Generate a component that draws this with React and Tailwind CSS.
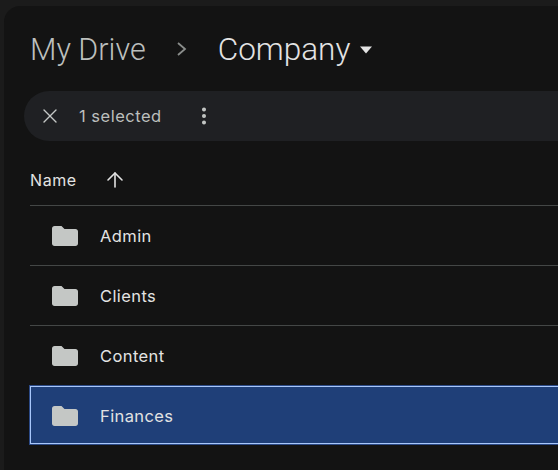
import React from "react";
import { X, ArrowUp, EllipsisVertical } from "lucide-react";

function FolderIcon() {
  return (
    <svg width="26" height="20" viewBox="0 0 26 20" className="text-[#c4c7c5]">
      <path
        fill="currentColor"
        d="M2.5 0H9.5L12.5 3H23.5C24.9 3 26 4.1 26 5.5V17.5C26 18.9 24.9 20 23.5 20H2.5C1.1 20 0 18.9 0 17.5V2.5C0 1.1 1.1 0 2.5 0Z"
      />
    </svg>
  );
}

function Row({ name }) {
  return (
    <div className="h-[60px] flex items-center border-b border-[#444746] pl-[22px] box-border">
      <FolderIcon />
      <span className="ml-[22px] text-[16.5px] tracking-[0.4px] text-[#e3e3e3] mt-[1px]">{name}</span>
    </div>
  );
}

export default function App() {
  return (
    <div className="w-[558px] h-[470px] overflow-hidden bg-[#1b1b1b] pl-[4px] pt-[6px] font-['Inter',sans-serif]">
      <div className="h-full bg-[#131313] rounded-tl-[16px]">
        <div className="flex items-center h-[85px] pl-[26px] font-['Roboto',sans-serif]">
          <span className="text-[30.5px] font-light text-[#bcbfbd] mt-[2px]">My Drive</span>
          <svg width="12" height="16" viewBox="0 0 12 16" className="ml-[30px] mt-[1px] text-[#8a8d8b]">
            <path d="M2 2L9 8L2 14" fill="none" stroke="currentColor" strokeWidth="1.8" />
          </svg>
          <span className="ml-[30px] text-[31.5px] font-light text-[#e3e3e3] mt-[2px]">Company</span>
          <svg width="14" height="8" viewBox="0 0 14 8" className="ml-[9px] mt-[2px] text-[#e3e3e3]">
            <path d="M1 0.5H13L7 7.5Z" fill="currentColor" />
          </svg>
        </div>
        <div className="flex items-center h-[50px] ml-[20px] bg-[#1f2023] rounded-l-[25px] pl-[14px]">
          <X size={24} strokeWidth={1.4} className="text-[#c4c7c5]" />
          <span className="ml-[17px] text-[16.5px] tracking-[0.5px] text-[#bcbfbd]">1 selected</span>
          <EllipsisVertical size={22} strokeWidth={2.4} className="ml-[31px] text-[#c4c7c5]" />
        </div>
        <div className="ml-[26px] mt-[15px]">
          <div className="h-[50px] flex items-center border-b border-[#444746]">
            <span className="text-[16px] tracking-[0.6px] text-[#e3e3e3] mb-[2px]">Name</span>
            <ArrowUp size={24} strokeWidth={1.6} className="ml-[26px] text-[#e3e3e3] mb-[2px]" />
          </div>
          <Row name="Admin" />
          <Row name="Clients" />
          <Row name="Content" />
          <div className="h-[58px] mr-[-10px] flex items-center border border-[#a8c7fa] outline outline-[#2c4a86] bg-[#1f3f78] pl-[21px] pt-[2px] box-border">
            <FolderIcon />
            <span className="ml-[22px] text-[16.5px] tracking-[0.4px] text-[#e3e3e3] mt-[1px]">Finances</span>
          </div>
        </div>
      </div>
    </div>
  );
}
